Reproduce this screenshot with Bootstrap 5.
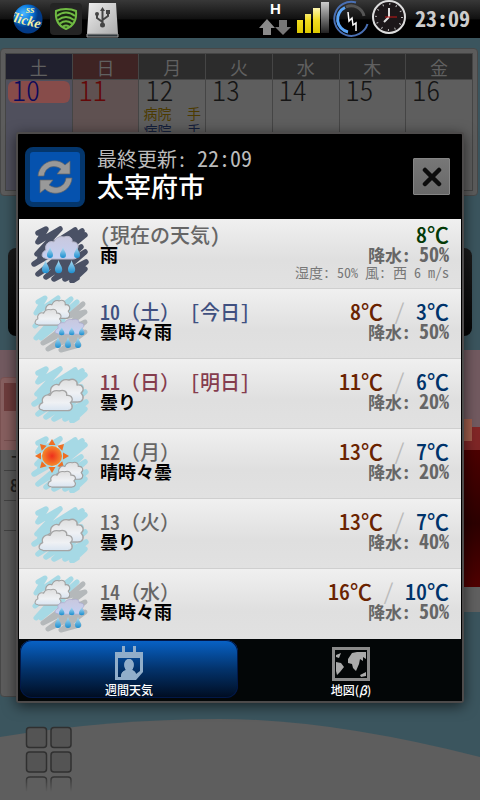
<!DOCTYPE html>
<html lang="ja">
<head>
<meta charset="utf-8">
<meta name="viewport" content="width=device-width, initial-scale=1">
<title>週間天気</title>
<link rel="stylesheet" href="https://cdn.jsdelivr.net/npm/bootstrap@5.3.0/dist/css/bootstrap.min.css">
<script src="https://cdn.jsdelivr.net/npm/bootstrap@5.3.0/dist/js/bootstrap.bundle.min.js"></script>
<style>
body{font-family:"Noto Sans CJK JP","Noto Sans",sans-serif;font-feature-settings:"hwid" 1;background:#3b555e;min-height:100vh}
.statusbar{height:38px;padding:0 10px 0 8px;background:linear-gradient(#383838,#101010 50%,#000 52%);color:#ccc}
.clock-text{font-size:22px;line-height:34px;height:38px;font-weight:700}
.stage{display:grid;min-height:calc(100vh - 38px);position:relative;overflow:hidden}
.home,.dialog-layer{grid-area:1/1;min-width:0}
.hill{position:absolute;left:0;bottom:0;width:100%;height:82px}
.home{position:relative;padding-top:10px}
.cal{background:#5c5c5c;border:1px solid #484848;border-radius:4px;padding:4px;height:148px;margin-right:2px}
.cal table{table-layout:fixed;width:100%;height:138px;border-collapse:collapse}
.cal th,.cal td{border:1px solid #454545;padding:0}
.cal th{height:26px;background:#2c2c2c;color:#606060;font-size:18px;line-height:20px;font-weight:400;text-align:center}
.cal th.sat{background:#20202e}.cal th.sun{background:#3e2323}
.cal td{background:#5e5e5e;vertical-align:top;color:#151515}
.cal td.sat{background:#50505d;color:#0a0a5c}.cal td.sun{background:#5f5151;color:#640808}
.daynum{font-size:28px;height:22px;line-height:16px;font-weight:300;padding-left:4px;margin:1px 2px 2px;border-radius:6px}
.daynum.today-mark{background:#874c4a}
.event-line{font-size:14px;line-height:17px;padding:0 4px}
.ev-a{color:#4c3a00}.ev-b{color:#15203c}
.dock{height:88px;margin:52px 8px 0;border-radius:8px;background:linear-gradient(#1c1c1c,#050505)}
.lower{margin-top:41px;height:320px}
.notes{width:50%;background:#5c5c5c;border:1px solid #484848;border-radius:4px;padding:5px 3px;color:#202020;font-size:18px;font-weight:500}
.notes-head{height:28px;background:#352424;color:#5c5c5c}
.notes-row{height:30px;line-height:26px;border-bottom:1px solid #424242;padding-left:6px}
.photo{width:16px;padding-top:42px}
.photo-edge{width:8px;height:8px;background:#84573a}
.photo-red{height:160px;background:linear-gradient(#560000,#2c0000 60%,#500000)}
.photo-red::before{content:"";display:block;width:8px;height:14px;background:#84573a}
.photo-foot{height:25px;background:#606060}
.band{position:absolute;left:0;right:0;top:312px;height:100px;background:rgba(205,100,100,.38)}
.apps{margin:29px 0 0 25px}
.dialog-layer{position:relative;padding:94px 16px 40px}
.weather{background:#000;border:2px solid #4d4b4b;border-radius:3px;box-shadow:0 3px 14px #0009}
.w-head{height:85px;padding:0 12px 0 7px}
.refresh{width:60px;height:60px;background:#0552ae;border:5px solid #04366c;border-radius:8px;padding:0}
.updated{font-size:20px;line-height:24px;color:#bbb}
.updated-time{font-size:22px}
.city{font-size:27px;line-height:30px;font-weight:500;color:#fff}
.close-btn{width:37px;height:37px;background:linear-gradient(#777,#686868);border:1px solid #858585;border-radius:1px;padding:0}
.w-list{margin:0 1px;--bs-list-group-border-radius:0}
.w-row{height:70px;background:linear-gradient(#f0f0f0,#dfdfdf 60%,#e1e1e1);border:0;border-bottom:1px solid #cfcfcf;padding:13px 12px 0 12px}
.w-row:last-child{border-bottom:0}
.w-row.now{padding-top:6px}
.w-icon{width:58px;height:58px;align-self:flex-start;margin-top:-7px;margin-right:11px}
.now .w-icon{margin-top:0}
.w-date{font-size:20px;line-height:20px;font-weight:500;color:#666}
.w-date.sat{color:#405080}.w-date.sun{color:#853d4e}
.w-day{font-feature-settings:normal}
.w-desc{font-size:18px;line-height:18px;font-weight:700;color:#000}
.w-values{margin-top:-3px}
.w-temp{font-size:22px;line-height:22px;font-weight:500;white-space:pre}
.t-now{color:#033a06}.t-hi{color:#6a2300}.t-lo{color:#00336a}.t-sep{color:#bbb;font-weight:400}
.w-rain{font-size:17px;line-height:20px;font-weight:700;color:#666}
.w-pct{font-size:20px;line-height:20px}
.w-extra{font-size:14px;line-height:15px;color:#777}
.w-tabs{height:62px;padding:1px 2px 3px;background:#030607}
.w-tabs .nav-link{border-radius:12px;padding:5px 0 0;color:#fff;font-size:12px;line-height:16px;font-weight:500;height:58px}
.w-tabs .nav-link.active{background:linear-gradient(#0863c8,#03336c 50%,#000c20);box-shadow:inset 0 0 0 1px #021848}
</style>
</head>
<body>
<svg width="0" height="0" class="position-absolute" aria-hidden="true">
<defs>
<linearGradient id="gCloud" x1="0" y1="0" x2="0" y2="1"><stop offset="0" stop-color="#dedede"/><stop offset=".6" stop-color="#eff1f4"/><stop offset="1" stop-color="#d8e4f1"/></linearGradient>
<linearGradient id="gRain" x1="0" y1="0" x2="0" y2="1"><stop offset="0" stop-color="#c8c8de"/><stop offset="1" stop-color="#c5d0f2"/></linearGradient>
<linearGradient id="gDrop" x1="0" y1="0" x2="0" y2="1"><stop offset="0" stop-color="#b5dff2"/><stop offset="1" stop-color="#1b8ed0"/></linearGradient>
<radialGradient id="gSun"><stop offset="0" stop-color="#ee2f1c"/><stop offset="1" stop-color="#f58a2b"/></radialGradient>
<path id="scrib" d="M7 8 15 4 7 17 29 4 6 29 44 5 9 33 51 6 3 39 54 10 7 49 50 22 15 52 54 27 23 54 55 37 34 54 54 44 41 56 46 53" fill="none" stroke-width="5.500" stroke-linecap="round" stroke-linejoin="round"/>
<path id="cloud" d="M3 22C-1 22-1 16 4 14 2 8 8 4 12 6 14 1 18 0 22 1 27-1 31 2 30 6 36 5 38 11 34 14 38 18 36 23 31 23H5Z" stroke-linejoin="round"/>
<path id="drop" d="M3 0C4 4 6 5 6 8A3 3 0 0 1 0 8C0 5 2 4 3 0Z" fill="url(#gDrop)"/>
<symbol id="cloudy" viewBox="0 0 58 58"><use href="#scrib" stroke="#a6d9e5"/><use href="#cloud" transform="translate(16 14)" fill="url(#gCloud)" stroke="#a5a5a5" stroke-width="1.400"/><use href="#cloud" transform="translate(8 25) scale(.92 .9)" fill="url(#gCloud)" stroke="#a5a5a5" stroke-width="1.400"/></symbol>
<symbol id="rainy" viewBox="0 0 58 58"><use href="#scrib" stroke="#4a5165"/><use href="#cloud" transform="translate(11 11)" fill="url(#gRain)" stroke="#b9b9cb"/><use href="#drop" x="16" y="22"/><use href="#drop" x="29" y="22"/><use href="#drop" x="43" y="22"/><use href="#drop" transform="translate(11 35) scale(1.2)"/><use href="#drop" transform="translate(24 35) scale(1.2)"/><use href="#drop" transform="translate(37 35) scale(1.2)"/></symbol>
<symbol id="cloudrain" viewBox="0 0 58 58"><path d="M7 7 14 3 5 18 27 3 4 31 40 4 5 43 46 7 10 43 32 25" fill="none" stroke="#a6d9e5" stroke-width="5" stroke-linecap="round" stroke-linejoin="round"/><path d="M52 9 38 21 54 17 12 48 54 27 17 54 54 37 30 55 48 50" fill="none" stroke="#b4b8ba" stroke-width="5" stroke-linecap="round" stroke-linejoin="round"/><use href="#cloud" transform="translate(12 5) scale(.74 .8)" fill="url(#gCloud)" stroke="#a0a0a0" stroke-width="1.500"/><use href="#cloud" transform="translate(4 14) scale(.72 .7)" fill="url(#gCloud)" stroke="#a5a5a5" stroke-width="1.500"/><use href="#cloud" transform="translate(24 24) scale(.8 .66)" fill="url(#gRain)" stroke="#aaaad0"/><use href="#drop" transform="translate(28 32) scale(.9 .75)"/><use href="#drop" transform="translate(38 32) scale(.9 .75)"/><use href="#drop" transform="translate(48 32) scale(.9 .75)"/><use href="#drop" transform="translate(24 42)"/><use href="#drop" transform="translate(34 42)"/><use href="#drop" transform="translate(44 42)"/></symbol>
<symbol id="suncloud" viewBox="0 0 58 58"><use href="#scrib" stroke="#a6d9e5"/><g fill="#ee6f23"><path id="ray" d="M17.500 10 21 4 24.500 10Z"/><use href="#ray" transform="rotate(45 21 21)"/><use href="#ray" transform="rotate(90 21 21)"/><use href="#ray" transform="rotate(135 21 21)"/><use href="#ray" transform="rotate(180 21 21)"/><use href="#ray" transform="rotate(225 21 21)"/><use href="#ray" transform="rotate(270 21 21)"/><use href="#ray" transform="rotate(315 21 21)"/></g><circle cx="21" cy="21" r="10" fill="url(#gSun)"/><use href="#cloud" transform="translate(25 27) scale(.74 .75)" fill="url(#gCloud)" stroke="#a0a0a0" stroke-width="1.500"/><use href="#cloud" transform="translate(17 36) scale(.76 .7)" fill="url(#gCloud)" stroke="#a0a0a0" stroke-width="1.500"/></symbol>
</defs>
</svg>

<header class="statusbar d-flex align-items-center justify-content-between">
  <svg width="116" height="38" viewBox="8 0 116 38" aria-hidden="true">
    <defs><radialGradient id="ball" cx=".35" cy=".3"><stop offset="0" stop-color="#4fb8ff"/><stop offset=".6" stop-color="#0878dd"/><stop offset="1" stop-color="#023a86"/></radialGradient><linearGradient id="drive" x1="0" y1="0" x2="1" y2="1"><stop offset="0" stop-color="#eee"/><stop offset="1" stop-color="#aaa"/></linearGradient><clipPath id="ballclip"><circle cx="28" cy="19" r="14.500"/></clipPath></defs>
    <circle cx="28" cy="19" r="14.500" fill="url(#ball)"/>
    <g font-family="Liberation Serif,serif" font-weight="700" font-style="italic" fill="#f2f0a8" clip-path="url(#ballclip)"><text x="26" y="13" font-size="11">ss</text><text x="9" y="22" font-size="14" transform="rotate(14 14 20)">flicker</text></g>
    <rect x="50" y="3" width="32" height="32" rx="4" fill="#242424"/>
    <path d="M66 9Q60 9 56 11C55 20 59 26 66 29 73 26 77 20 76 11Q72 9 66 9Z" fill="#1a2614" stroke="#70bb43" stroke-width="2"/>
    <path d="M57 16Q66 9 75 16M58 20Q66 14 74 20M60 23.500Q66 19 72 23.500M63 26.500Q66 24.500 69 26.500" fill="none" stroke="#70bb43" stroke-width="2"/>
    <path d="M89 3H116L118 34H87Z" fill="url(#drive)"/><path d="M87 34H118V37H87Z" fill="#30383d" stroke="#999"/>
    <path d="M102.500 9V26M102.500 22 97 18V14M102.500 20 108 16V12" fill="none" stroke="#444" stroke-width="2"/><circle cx="102.500" cy="25" r="2.500" fill="#444"/><circle cx="97" cy="14" r="2" fill="#444"/><path d="M106 10H110V14H106ZM100 11 102.500 7 105 11Z" fill="#444"/>
  </svg>
  <div class="d-flex align-items-center gap-2">
    <svg width="150" height="38" viewBox="256 0 150 38" aria-hidden="true">
      <defs><linearGradient id="bar" x1="0" y1="0" x2="0" y2="1"><stop offset="0" stop-color="#fff7b0"/><stop offset=".5" stop-color="#f1dc20"/><stop offset="1" stop-color="#dcc800"/></linearGradient><linearGradient id="barg" x1="0" y1="0" x2="0" y2="1"><stop offset="0" stop-color="#ccc"/><stop offset="1" stop-color="#222"/></linearGradient></defs>
      <text x="269" y="14" font-family="Liberation Sans,sans-serif" font-weight="700" font-size="15" fill="#fff">H</text>
      <path d="M266 19 274 28H270V35H262V28H258Z" fill="#8a8a8a"/><path d="M282 35 290 27H286V20H278V27H274Z" fill="#777"/>
      <path d="M296 20h6v13h-6zM304 14h6v19h-6zM312 8h7v25h-7z" fill="url(#bar)"/><path d="M320 2h8v31h-8z" fill="url(#barg)"/>
      <path d="M355 2.500A17 17 0 1 0 366.500 24" fill="none" stroke="#4a70b4" stroke-width="2"/><path d="M344 7.500A13 13 0 0 0 347 32" fill="none" stroke="#5aa5f8" stroke-width="3"/><path d="M345 7A13 13 0 0 1 363 16" fill="none" stroke="#555" stroke-width="3"/><path d="M347 12 348 21 351 18 352 25 355 23 355 31" fill="none" stroke="#fff" stroke-width="1.500"/>
      <circle cx="388" cy="17" r="16" fill="#1c1719" stroke="#ddd" stroke-width="2"/><circle cx="388" cy="17" r="13" fill="none" stroke="#bbb" stroke-dasharray="1 5.800" stroke-width="2"/><path d="M388 17V8M388 17 383 22" stroke="#ddd" stroke-width="2"/><path d="M384 17H396" stroke="#c71818"/>
    </svg>
    <time class="clock-text">23:09</time>
  </div>
</header>

<main class="stage">
  <svg class="hill" viewBox="0 0 480 82" preserveAspectRatio="none" aria-hidden="true"><path d="M0 19Q110 1 220 1 330 1 480 39V82H0Z" fill="#5e5e5e"/></svg>
  <section class="home">
    <div class="cal">
      <table>
        <thead><tr><th class="sat">土</th><th class="sun">日</th><th>月</th><th>火</th><th>水</th><th>木</th><th>金</th></tr></thead>
        <tbody><tr>
          <td class="sat"><div class="daynum today-mark">10</div></td>
          <td class="sun"><div class="daynum">11</div></td>
          <td><div class="daynum">12</div><div class="event-line ev-a d-flex justify-content-between"><span>病院</span><span>手</span></div><div class="event-line ev-b d-flex justify-content-between"><span>病院</span><span>手</span></div></td>
          <td><div class="daynum">13</div></td><td><div class="daynum">14</div></td><td><div class="daynum">15</div></td><td><div class="daynum">16</div></td>
        </tr></tbody>
      </table>
    </div>
    <div class="dock"></div>
    <div class="lower d-flex justify-content-between">
      <div class="notes"><div class="notes-head"></div><div class="notes-row"></div><div class="notes-row">-</div><div class="notes-row">8</div><div class="notes-row"></div></div>
      <div class="photo"><div class="photo-edge"></div><div class="photo-red"></div><div class="photo-foot"></div></div>
    </div>
    <div class="band"></div>
    <svg class="apps d-block" width="48" height="70" viewBox="0 0 48 70" aria-hidden="true">
      <defs><linearGradient id="fade" x1="0" y1="0" x2="0" y2="1"><stop offset="0" stop-color="#333"/><stop offset="1" stop-color="#333" stop-opacity="0"/></linearGradient></defs>
      <g fill="#545454" stroke="#303030" stroke-width="1.500"><rect x="1.500" y="1.500" width="20" height="20" rx="3"/><rect x="26" y="1.500" width="20" height="20" rx="3"/><rect x="1.500" y="26" width="20" height="20" rx="3"/><rect x="26" y="26" width="20" height="20" rx="3"/></g>
      <path d="M1.500 66V54Q1.500 51 5 51H18Q21.500 51 21.500 54V66M26 66V54Q26 51 29 51H43Q46 51 46 54V66" fill="none" stroke="url(#fade)" stroke-width="1.500"/>
    </svg>
  </section>

  <div class="dialog-layer">
    <section class="weather" role="dialog" aria-label="太宰府市">
      <div class="w-head d-flex align-items-center">
        <button class="refresh flex-shrink-0 d-flex align-items-center justify-content-center" type="button" aria-label="更新">
          <svg width="38" height="38" viewBox="0 0 38 38" aria-hidden="true"><g fill="#999" stroke="#666" stroke-width=".7"><path id="arr" d="M2 18C3 4 20-2 29 7L34 3V16H21L25 11C18 6 9 9 8 18Z"/><use href="#arr" transform="rotate(180 19 19)"/></g></svg>
        </button>
        <div class="flex-grow-1 ms-2 ps-1 pb-2">
          <div class="updated">最終更新: <span class="updated-time">22:09</span></div>
          <div class="city">太宰府市</div>
        </div>
        <button class="close-btn d-flex align-items-center justify-content-center" type="button" aria-label="閉じる"><svg width="20" height="20" viewBox="0 0 20 20" aria-hidden="true"><path d="M3 3 17 17M17 3 3 17" stroke="#0c0c0c" stroke-width="4.500" stroke-linecap="round"/></svg></button>
      </div>
      <ul class="list-group w-list">
        <li class="list-group-item w-row now d-flex"><svg class="w-icon" aria-hidden="true"><use href="#rainy"/></svg><div class="flex-grow-1"><div class="w-date">(現在の天気)</div><div class="w-desc">雨</div></div><div class="w-values text-end"><div class="w-temp t-now">8℃</div><div class="w-rain">降水: <span class="w-pct">50%</span></div><div class="w-extra">湿度: 50% 風: 西 6 m/s</div></div></li>
        <li class="list-group-item w-row d-flex"><svg class="w-icon" aria-hidden="true"><use href="#cloudrain"/></svg><div class="flex-grow-1"><div class="w-date sat">10<span class="w-day">（土）</span> [今日]</div><div class="w-desc">曇時々雨</div></div><div class="w-values text-end"><div class="w-temp"><span class="t-hi">8℃</span><span class="t-sep"> / </span><span class="t-lo">3℃</span></div><div class="w-rain">降水: <span class="w-pct">50%</span></div></div></li>
        <li class="list-group-item w-row d-flex"><svg class="w-icon" aria-hidden="true"><use href="#cloudy"/></svg><div class="flex-grow-1"><div class="w-date sun">11<span class="w-day">（日）</span> [明日]</div><div class="w-desc">曇り</div></div><div class="w-values text-end"><div class="w-temp"><span class="t-hi">11℃</span><span class="t-sep"> / </span><span class="t-lo">6℃</span></div><div class="w-rain">降水: <span class="w-pct">20%</span></div></div></li>
        <li class="list-group-item w-row d-flex"><svg class="w-icon" aria-hidden="true"><use href="#suncloud"/></svg><div class="flex-grow-1"><div class="w-date">12<span class="w-day">（月）</span></div><div class="w-desc">晴時々曇</div></div><div class="w-values text-end"><div class="w-temp"><span class="t-hi">13℃</span><span class="t-sep"> / </span><span class="t-lo">7℃</span></div><div class="w-rain">降水: <span class="w-pct">20%</span></div></div></li>
        <li class="list-group-item w-row d-flex"><svg class="w-icon" aria-hidden="true"><use href="#cloudy"/></svg><div class="flex-grow-1"><div class="w-date">13<span class="w-day">（火）</span></div><div class="w-desc">曇り</div></div><div class="w-values text-end"><div class="w-temp"><span class="t-hi">13℃</span><span class="t-sep"> / </span><span class="t-lo">7℃</span></div><div class="w-rain">降水: <span class="w-pct">40%</span></div></div></li>
        <li class="list-group-item w-row d-flex"><svg class="w-icon" aria-hidden="true"><use href="#cloudrain"/></svg><div class="flex-grow-1"><div class="w-date">14<span class="w-day">（水）</span></div><div class="w-desc">曇時々雨</div></div><div class="w-values text-end"><div class="w-temp"><span class="t-hi">16℃</span><span class="t-sep"> / </span><span class="t-lo">10℃</span></div><div class="w-rain">降水: <span class="w-pct">50%</span></div></div></li>
      </ul>
      <div class="nav nav-pills nav-fill w-tabs gap-1" role="tablist">
        <button class="nav-link active flex-fill w-25" type="button" role="tab" aria-selected="true">
          <svg class="d-block mx-auto" width="30" height="36" viewBox="0 0 30 36" aria-hidden="true"><path fill="#91aeca" d="M1 6H8V0H11V6H19V0H22V6H29V26L22 34H1ZM4 12V31H7C7 26 10 25 12 24 9 20 10 13 15 13S21 20 18 24C20 25 22 26 22 28L26 25V12Z" fill-rule="evenodd"/><path d="M7 31C7 26 10 25 12 24 9 20 10 13 15 13S21 20 18 24C21 25 22 27 22 31Z" fill="#91aeca"/></svg>週間天気</button>
        <button class="nav-link flex-fill w-25" type="button" role="tab" aria-selected="false">
          <svg class="d-block mx-auto" width="38" height="36" viewBox="0 0 38 36" aria-hidden="true"><rect x="1.500" y="2.500" width="35" height="31" fill="#030607" stroke="#8a8a8a" stroke-width="3"/><path fill="#aaa" d="M4 9 9 7 7 12 4 11ZM4 16 9 17 12 21 8 26 5 29 4 25ZM16 13 20 7 25 6 34 6 34 13 31 11 31 15 28 13 27 18 24 25 21 22 20 18 16 17ZM28 29 34 26 34 30 29 31Z"/></svg>地図(<i>β</i>)</button>
      </div>
    </section>
  </div>
</main>
</body>
</html>
